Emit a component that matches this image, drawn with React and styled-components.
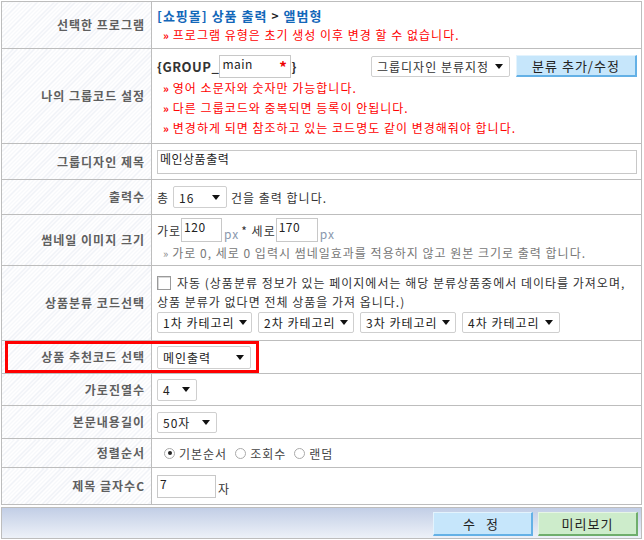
import React from "react";
import styled, { createGlobalStyle } from "styled-components";

const GlobalStyle = createGlobalStyle`
  html, body {
    margin: 0;
    padding: 0;
    background: #fff;
  }
  body {
    font-family: "Noto Sans CJK KR", "Noto Sans", sans-serif;
    font-size: 12px;
    letter-spacing: 1px;
    color: #333;
  }
`;

const Page = styled.div`
  position: relative;
  width: 641px;
  padding: 1px 0 0 1px;
`;

const Table = styled.table`
  width: 641px;
  border-collapse: collapse;
  border: 1px solid #bdbdbd;
  table-layout: fixed;
`;

const Row = styled.tr`
  height: ${(p) => p.h}px;
`;

const Label = styled.th`
  width: 143px;
  padding: 0 6px 0 0;
  border: 1px solid #bdbdbd;
  text-align: right;
  font-weight: bold;
  color: #5f5f5f;
  line-height: 1;
  white-space: nowrap;
  background: repeating-linear-gradient(
    -45deg,
    #ffffff 0 2px,
    #edf0f5 2px 3px
  );
`;

const Value = styled.td`
  padding: 0 0 0 5px;
  border: 1px solid #bdbdbd;
  vertical-align: middle;
  line-height: 19px;
  color: #333;
`;

const Line = styled.div`
  display: flex;
  align-items: center;
  gap: ${(p) => p.gap || 0}px;
  min-height: ${(p) => p.h || 19}px;
  padding-left: ${(p) => p.indent || 0}px;
  white-space: nowrap;
`;

const Title = styled.span`
  font-weight: bold;
  color: #1367b9;
  font-size: 13px;
`;

const Sep = styled.span`
  font-weight: bold;
  color: #222;
  margin: 0 4px;
`;

const Warn = styled.div`
  color: #f00;
  padding-left: 6px;
  white-space: nowrap;
  line-height: 19px;
  &::before {
    content: "»";
    font-weight: bold;
    font-size: 11px;
    margin-right: 3px;
  }
`;

const Hint = styled(Warn)`
  color: #777;
  &::before {
    font-weight: normal;
    color: #888;
  }
`;

const Code = styled.span`
  font-weight: bold;
  font-size: 13px;
  letter-spacing: 0.5px;
  color: #333;
`;

const TextInput = styled.span`
  display: inline-flex;
  align-items: flex-start;
  justify-content: space-between;
  box-sizing: border-box;
  width: ${(p) => p.w}px;
  height: ${(p) => p.hh || 23}px;
  padding: 0 3px 0 2px;
  border: 1px solid #c8c8c8;
  background: #fff;
  color: #222;
  font-size: 12px;
  line-height: 16px;
  letter-spacing: 0.5px;
`;

const Star = styled.span`
  color: #e00;
  font-weight: bold;
  font-size: 15px;
  margin-top: 3px;
`;

const Select = styled.span`
  display: inline-flex;
  align-items: center;
  justify-content: space-between;
  box-sizing: border-box;
  width: ${(p) => p.w}px;
  height: ${(p) => p.hh || 21}px;
  padding: 0 6px 0 5px;
  border: 1px solid #cfcfcf;
  border-radius: 2px;
  background: #fff;
  color: ${(p) => p.color || "#222"};
  white-space: nowrap;
  &::after {
    content: "";
    border-left: 4px solid transparent;
    border-right: 4px solid transparent;
    border-top: 5px solid #111;
    margin-left: 4px;
  }
`;

const Button = styled.span`
  display: inline-flex;
  align-items: center;
  justify-content: center;
  box-sizing: border-box;
  width: ${(p) => p.w}px;
  height: ${(p) => p.hh || 22}px;
  font-size: 13px;
  color: #222;
  background: ${(p) => (p.green ? "#cdeccb" : "#c6e6fb")};
  border: 1px solid ${(p) => (p.green ? "#e6f6e4" : "#e3f3fd")};
  border-right: 2px solid ${(p) => (p.green ? "#6fae6c" : "#64b1e6")};
  border-bottom: 2px solid ${(p) => (p.green ? "#6fae6c" : "#64b1e6")};
  letter-spacing: ${(p) => p.spread || 1}px;
`;

const Checkbox = styled.span`
  display: inline-block;
  width: 14px;
  height: 14px;
  box-sizing: border-box;
  border: 1px solid #9a9a9a;
  box-shadow: inset 1px 1px 0 #d8d8d8;
  background: #fff;
  margin-right: 6px;
`;

const Radio = styled.span`
  display: inline-flex;
  align-items: center;
  justify-content: center;
  width: 11px;
  height: 11px;
  box-sizing: border-box;
  border-radius: 50%;
  border: 1px solid #aaa;
  background: #fff;
  margin: 0 4px 0 0;
  &::after {
    content: "";
    width: 4px;
    height: 4px;
    border-radius: 50%;
    background: ${(p) => (p.checked ? "#222" : "transparent")};
  }
`;

const Choice = styled.span`
  display: inline-flex;
  align-items: center;
  margin-right: 8px;
  color: #444;
`;

const Footer = styled.div`
  display: flex;
  justify-content: flex-end;
  align-items: center;
  gap: 5px;
  box-sizing: border-box;
  width: 641px;
  height: 32px;
  margin-top: 2px;
  padding: 2px 3px 0 0;
  border: 1px solid #bdbdbd;
  background: linear-gradient(#c2cee6, #edf1f8);
`;

const Highlight = styled.div`
  position: absolute;
  left: 5px;
  top: 341px;
  width: 254px;
  height: 32px;
  box-sizing: border-box;
  border: 3px solid #f00;
  pointer-events: none;
`;

const Unit = styled.span`
  color: ${(p) => p.color || "#8a98ad"};
  align-self: flex-end;
  margin: 0 2px;
`;

const App = () => (
  <>
    <GlobalStyle />
    <Page>
      <Table>
        <tbody>
          <Row h={47}>
            <Label>선택한 프로그램</Label>
            <Value>
              <Line>
                <Title>[쇼핑몰] 상품 출력</Title>
                <Sep>&gt;</Sep>
                <Title>앨범형</Title>
              </Line>
              <Warn>프로그램 유형은 초기 생성 이후 변경 할 수 없습니다.</Warn>
            </Value>
          </Row>
          <Row h={95}>
            <Label>나의 그룹코드 설정</Label>
            <Value>
              <Line h={24}>
                <Code>{"{GROUP_"}</Code>
                <TextInput w={72}>
                  main<Star>*</Star>
                </TextInput>
                <Code>{"}"}</Code>
                <Line style={{ marginLeft: "auto", paddingRight: 4 }} gap={6}>
                  <Select w={139} color="#333">
                    그룹디자인 분류지정
                  </Select>
                  <Button w={121}>분류 추가/수정</Button>
                </Line>
              </Line>
              <Warn>영어 소문자와 숫자만 가능합니다.</Warn>
              <Warn>다른 그룹코드와 중복되면 등록이 안됩니다.</Warn>
              <Warn>변경하게 되면 참조하고 있는 코드명도 같이 변경해줘야 합니다.</Warn>
            </Value>
          </Row>
          <Row h={36}>
            <Label>그룹디자인 제목</Label>
            <Value>
              <TextInput w={480} hh={24}>
                메인상품출력
              </TextInput>
            </Value>
          </Row>
          <Row h={35}>
            <Label>출력수</Label>
            <Value>
              <Line gap={4}>
                <span>총</span>
                <Select w={54} hh={22}>
                  16
                </Select>
                <span>건을 출력 합니다.</span>
              </Line>
            </Value>
          </Row>
          <Row h={51}>
            <Label>썸네일 이미지 크기</Label>
            <Value>
              <Line h={26}>
                <span>가로</span>
                <TextInput w={41} hh={24}>
                  120
                </TextInput>
                <Unit>px</Unit>
                <span>* 세로</span>
                <TextInput w={42} hh={24}>
                  170
                </TextInput>
                <Unit>px</Unit>
              </Line>
              <Hint>가로 0, 세로 0 입력시 썸네일효과를 적용하지 않고 원본 크기로 출력 합니다.</Hint>
            </Value>
          </Row>
          <Row h={75}>
            <Label>상품분류 코드선택</Label>
            <Value>
              <Line h={18}>
                <Checkbox />
                <span>
                  자동 (상품분류 정보가 있는 페이지에서는 해당 분류상품중에서 데이타를 가져오며,
                </span>
              </Line>
              <Line h={16}>상품 분류가 없다면 전체 상품을 가져 옵니다.)</Line>
              <Line gap={6} h={22}>
                <Select w={95}>1차 카테고리</Select>
                <Select w={96}>2차 카테고리</Select>
                <Select w={96}>3차 카테고리</Select>
                <Select w={98}>4차 카테고리</Select>
              </Line>
            </Value>
          </Row>
          <Row h={33}>
            <Label>상품 추천코드 선택</Label>
            <Value>
              <Select w={94} hh={23}>
                메인출력
              </Select>
            </Value>
          </Row>
          <Row h={32}>
            <Label>가로진열수</Label>
            <Value>
              <Select w={40} hh={22}>
                4
              </Select>
            </Value>
          </Row>
          <Row h={33}>
            <Label>본문내용길이</Label>
            <Value>
              <Select w={60}>50자</Select>
            </Value>
          </Row>
          <Row h={29}>
            <Label>정렬순서</Label>
            <Value>
              <Line indent={7}>
                <Choice>
                  <Radio checked />
                  기본순서
                </Choice>
                <Choice>
                  <Radio />
                  조회수
                </Choice>
                <Choice>
                  <Radio />
                  랜덤
                </Choice>
              </Line>
            </Value>
          </Row>
          <Row h={37}>
            <Label>제목 글자수C</Label>
            <Value>
              <Line>
                <TextInput w={59} hh={23}>
                  7
                </TextInput>
                <Unit color="#333">자</Unit>
              </Line>
            </Value>
          </Row>
        </tbody>
      </Table>
      <Footer>
        <Button w={100} hh={24} spread={4}>
          수 정
        </Button>
        <Button w={100} hh={24} green>
          미리보기
        </Button>
      </Footer>
      <Highlight />
    </Page>
  </>
);

export default App;
